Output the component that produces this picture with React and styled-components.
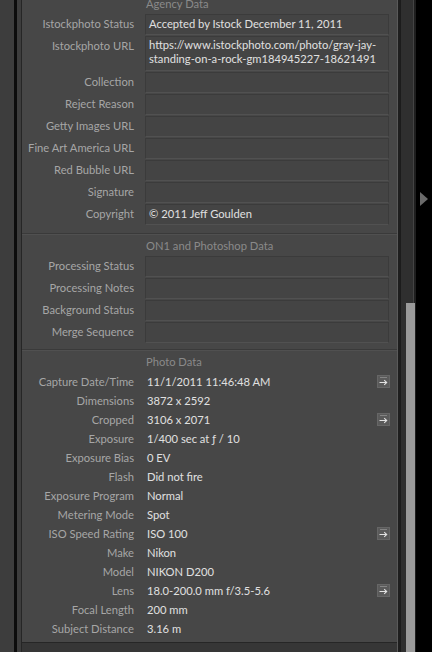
import React from "react";
import styled, { createGlobalStyle } from "styled-components";

const GlobalStyle = createGlobalStyle`
    html, body {
        margin: 0;
        padding: 0;
        background: #000;
    }
    body {
        font-family: Lato, "Noto Sans", sans-serif;
    }
`;

const agencyRows = [
    { label: "Istockphoto Status", value: "Accepted by Istock December 11, 2011" },
    { label: "Istockphoto URL", value: "https://www.istockphoto.com/photo/gray-jay-standing-on-a-rock-gm184945227-18621491", tall: true },
    { label: "Collection" },
    { label: "Reject Reason" },
    { label: "Getty Images URL" },
    { label: "Fine Art America URL" },
    { label: "Red Bubble URL" },
    { label: "Signature" },
    { label: "Copyright", value: "© 2011 Jeff Goulden" },
];

const on1Rows = [
    { label: "Processing Status" },
    { label: "Processing Notes" },
    { label: "Background Status" },
    { label: "Merge Sequence" },
];

const photoRows = [
    { label: "Capture Date/Time", value: "11/1/2011 11:46:48 AM", jump: true },
    { label: "Dimensions", value: "3872 x 2592" },
    { label: "Cropped", value: "3106 x 2071", jump: true },
    { label: "Exposure", value: "1/400 sec at ƒ / 10" },
    { label: "Exposure Bias", value: "0 EV" },
    { label: "Flash", value: "Did not fire" },
    { label: "Exposure Program", value: "Normal" },
    { label: "Metering Mode", value: "Spot" },
    { label: "ISO Speed Rating", value: "ISO 100", jump: true },
    { label: "Make", value: "Nikon" },
    { label: "Model", value: "NIKON D200" },
    { label: "Lens", value: "18.0-200.0 mm f/3.5-5.6", jump: true },
    { label: "Focal Length", value: "200 mm" },
    { label: "Subject Distance", value: "3.16 m" },
];

// little "jump to" button next to some exif values
const JumpIcon = () => (
    <svg width="13" height="13" viewBox="0 0 13 13">
        <rect x="0.5" y="0.5" width="12" height="12" fill="#5a5a5a" stroke="#666" />
        <line x1="3" y1="2.5" x2="10" y2="2.5" stroke="#848484" strokeWidth="1" />
        <path d="M2.5 7.5 H9.5 M7.2 5.2 L9.7 7.5 L7.2 9.8" stroke="#e2e2e2" strokeWidth="1.1" fill="none" />
    </svg>
);

const FieldRow = ({ label, value, tall }) => (
    <BoxRow>
        <Label>{label}</Label>
        <FieldBox $tall={tall}>{value}</FieldBox>
    </BoxRow>
);

const InfoRow = ({ label, value, jump }) => (
    <TextRow>
        <Label>{label}</Label>
        <Value>{value}</Value>
        {jump ? <JumpBtn><JumpIcon /></JumpBtn> : null}
    </TextRow>
);

const App = () => {
    return (
        <Screen>
            <GlobalStyle />
            <LeftRail>
                <RailStrip />
                <RailGap />
                <RailStrip $narrow />
            </LeftRail>
            <Panel>
                <Scroller>
                    <Section $first>
                        <Header>Agency Data</Header>
                        <Boxes>
                            {agencyRows.map((r) => <FieldRow key={r.label} {...r} />)}
                        </Boxes>
                    </Section>
                    <Section>
                        <Header>ON1 and Photoshop Data</Header>
                        <Boxes>
                            {on1Rows.map((r) => <FieldRow key={r.label} {...r} />)}
                        </Boxes>
                    </Section>
                    <Section>
                        <Header>Photo Data</Header>
                        <div>
                            {photoRows.map((r) => <InfoRow key={r.label} {...r} />)}
                        </div>
                    </Section>
                </Scroller>
            </Panel>
            <ScrollBar>
                <Track>
                    <Thumb />
                </Track>
            </ScrollBar>
            <RightEdge>
                <Arrow />
            </RightEdge>
        </Screen>
    );
};

export default App;

const Screen = styled.div`
    width: 432px;
    height: 652px;
    display: flex;
    background: #000;
    overflow: hidden;
`;

const LeftRail = styled.div`
    display: flex;
    height: 100%;
`;

const RailStrip = styled.div`
    width: ${(p) => (p.$narrow ? "4px" : "14px")};
    background: #3d3d3d;
`;

const RailGap = styled.div`
    width: 3px;
    background: #0c0c0c;
`;

const Panel = styled.div`
    width: 377px;
    height: 100%;
    background: #363636;
    border-left: 1px solid #262626;
    border-right: 1px solid #5a5a5a;
    box-sizing: border-box;
    display: flex;
    flex-direction: column;
`;

const Scroller = styled.div`
    height: 643px;
    overflow: hidden;
    background: #474747;
    border-bottom: 1px solid #262626;
    box-sizing: border-box;
`;

const Section = styled.div`
    padding: 5px 0 ${(p) => (p.$first ? "8px" : "6px")};
    margin-top: ${(p) => (p.$first ? "-8px" : "0")};
    border-top: ${(p) => (p.$first ? "none" : "1px solid #3a3a3a")};
    box-shadow: ${(p) => (p.$first ? "none" : "inset 0 1px 0 #505050")};
`;

const Header = styled.div`
    height: 14px;
    line-height: 14px;
    margin: 0 0 3px 124px;
    font-size: 11.2px;
    color: #8a8a8a;
`;

const Boxes = styled.div`
    display: flex;
    flex-direction: column;
    gap: 1px;
`;

const BoxRow = styled.div`
    display: flex;
    align-items: flex-start;
`;

const Label = styled.div`
    width: 112px;
    flex: none;
    text-align: right;
    font-size: 11.2px;
    line-height: 20px;
    color: #a6a6a6;
    white-space: nowrap;
`;

const FieldBox = styled.div`
    margin-left: 11px;
    width: 244px;
    min-height: ${(p) => (p.$tall ? "35px" : "21px")};
    box-sizing: border-box;
    padding: ${(p) => (p.$tall ? "1px 3px 4px" : "0 3px 1px")};
    background: #444444;
    border: 1px solid #3b3b3b;
    border-bottom-color: #515151;
    font-size: 11.2px;
    line-height: ${(p) => (p.$tall ? "14px" : "18px")};
    color: #e0e0e0;
`;

const TextRow = styled.div`
    display: flex;
    align-items: center;
    height: 19px;
    ${Label} {
        line-height: 19px;
    }
`;

const Value = styled.div`
    margin-left: 13px;
    flex: 1;
    font-size: 11.2px;
    color: #e0e0e0;
    white-space: nowrap;
`;

const JumpBtn = styled.div`
    width: 13px;
    height: 13px;
    margin-right: 7px;
    display: flex;
`;

const ScrollBar = styled.div`
    width: 18px;
    height: 100%;
    display: flex;
    background: #1e1e1e;
    padding-left: 2px;
    box-sizing: border-box;
`;

const Track = styled.div`
    width: 14px;
    height: 100%;
    background: #2f2f2f;
    border-left: 1px solid #1c1c1c;
    border-right: 1px solid #444;
    box-sizing: border-box;
    padding: 303px 0 0 5px;
`;

const Thumb = styled.div`
    width: 9px;
    height: 100%;
    background: #9a9a9a;
`;

const RightEdge = styled.div`
    flex: 1;
    height: 100%;
    display: flex;
    align-items: flex-start;
    justify-content: center;
    padding-top: 192px;
    box-sizing: border-box;
`;

const Arrow = styled.div`
    width: 0;
    height: 0;
    border-top: 7px solid transparent;
    border-bottom: 7px solid transparent;
    border-left: 8px solid #6a6a6a;
`;
